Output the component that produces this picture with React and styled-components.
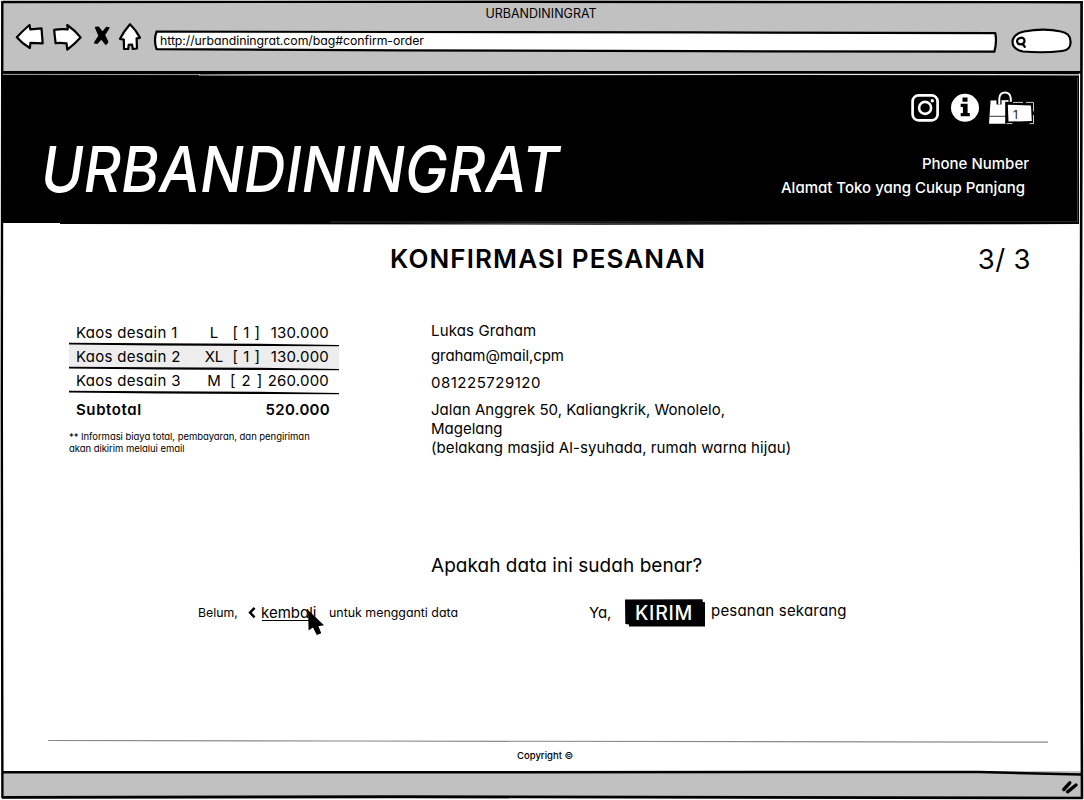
import React from "react";
import styled, { createGlobalStyle } from "styled-components";

const GlobalStyle = createGlobalStyle`
  *, *::before, *::after { box-sizing: border-box; }
  body { margin: 0; background: #fff; overflow: hidden; }
  p, h1, h2 { margin: 0; font-weight: inherit; }
`;

const Window = styled.div`
  position: relative;
  display: flex;
  flex-direction: column;
  width: 1084px;
  height: 800px;
  overflow: hidden;
  background: #fff;
  color: #000;
  font-family: Inter, "Liberation Sans", sans-serif;
  font-feature-settings: "cv11";
`;

const FrameLines = styled.svg`
  position: absolute;
  inset: 0;
  pointer-events: none;
`;

const TitleBar = styled.div`
  flex: none;
  height: 73px;
  margin: 0 2px;
  background: #c1c1c1;
`;

const WindowTitle = styled.div`
  height: 22px;
  padding: 4px 2px 0 0;
  font-size: 12.5px;
  line-height: 19px;
  text-align: center;
`;

const Toolbar = styled.div`
  display: flex;
  padding-left: 13px;
`;

const ToolIcon = styled.svg`
  display: block;
  flex: none;
  margin-right: ${(p) => p.$gap || 0}px;
  fill: #fff;
  stroke: #000;
  stroke-width: 2.2;
  stroke-linejoin: round;
  stroke-linecap: round;
`;

const AddressField = styled.div`
  position: relative;
  width: 845px;
  height: 32px;
  margin-right: 12px;
`;

const FieldShape = styled(ToolIcon)`
  position: absolute;
  inset: 0;
`;

const Address = styled.span`
  position: relative;
  display: block;
  padding: 9px 0 0 7px;
  font-size: 12.3px;
  line-height: 20px;
  letter-spacing: -0.05px;
`;

const Header = styled.header`
  flex: none;
  display: flex;
  justify-content: space-between;
  height: 150px;
  margin: 0 5px 0 3px;
  padding: 17px 45px 0 38px;
  background: #000;
  color: #fff;
`;

const Brand = styled.h1`
  width: 560px;
  padding-top: 44px;
  font-size: 63.5px;
  font-weight: 500;
  font-style: italic;
  line-height: 69px;
  letter-spacing: 0.2px;
  transform: scaleX(0.907);
  transform-origin: left;
`;

const HeaderSide = styled.div`
  display: flex;
  flex-direction: column;
  align-items: flex-end;
`;

const IconRow = styled.div`
  display: flex;
  align-self: flex-end;
  margin-right: -3px;
  height: 36px;
`;

const Bag = styled.div`
  position: relative;
  width: 48px;
  height: 36px;
`;

const BagCount = styled.span`
  position: absolute;
  left: 24px;
  top: 17px;
  color: #222;
  font-size: 12px;
  line-height: 16px;
`;

const StoreLine = styled.p`
  margin: ${(p) => p.$margin};
  font-size: 15px;
  font-weight: 500;
  line-height: 24px;
`;

const Main = styled.main`
  flex: 1;
  display: flex;
  flex-direction: column;
  padding-top: 19px;
`;

const HeadingRow = styled.div`
  display: flex;
  justify-content: space-between;
  height: 32px;
  padding: 0 53px 0 390px;
  line-height: 32px;
`;

const Heading = styled.h2`
  padding-top: 1px;
  font-size: 26px;
  font-weight: 600;
  letter-spacing: 1.1px;
`;

const Step = styled.span`
  padding-top: 1px;
  font-size: 27.5px;
  letter-spacing: 0.4px;
  white-space: pre;
`;

const Details = styled.section`
  display: flex;
  gap: 92px;
  height: 280px;
  padding: 47px 0 0 69px;
`;

const Order = styled.div`
  width: 270px;
  font-size: 15px;
`;

const ItemRow = styled.div`
  position: relative;
  display: grid;
  grid-template-columns: 121px 34px 31px 1fr;
  height: 24px;
  padding: 0 10px 0 7px;
  line-height: 23px;
  white-space: nowrap;
  background: ${(p) => (p.$shaded ? "#ededed" : "transparent")};
`;

const ItemName = styled.span`
  letter-spacing: 0.3px;
`;

const Centered = styled.span`
  display: flex;
  justify-content: center;
  letter-spacing: ${(p) => p.$spacing || 0}px;
`;

const Price = styled.span`
  text-align: right;
  letter-spacing: 0.2px;
`;

const RowLine = styled.svg`
  position: absolute;
  left: 0;
  bottom: -3px;
  z-index: 1;
`;

const Subtotal = styled.div`
  display: flex;
  justify-content: space-between;
  padding: 0 9px 0 7px;
  font-weight: 600;
  line-height: 33px;
`;

const SubtotalLabel = styled.span`
  letter-spacing: 0.6px;
`;

const SubtotalValue = styled.span`
  letter-spacing: 0.3px;
`;

const Note = styled.p`
  margin-top: 5px;
  font-size: 9.5px;
  line-height: 12px;
  letter-spacing: -0.05px;
  white-space: nowrap;
`;

const Contact = styled.div`
  font-size: 15px;
  line-height: 19px;
`;

const ContactLine = styled.p`
  margin-bottom: ${(p) => p.$after || 0}px;
  letter-spacing: ${(p) => p.$spacing || 0}px;
  white-space: nowrap;
`;

const Question = styled.p`
  padding-left: 431px;
  font-size: 19px;
  line-height: 24px;
  letter-spacing: 0.04px;
`;

const Actions = styled.div`
  display: flex;
  height: 28px;
  margin-top: 21px;
  padding-left: 198px;
  line-height: 27px;
  white-space: nowrap;
`;

const ActionText = styled.span`
  flex: none;
  width: ${(p) => p.$width}px;
  margin-top: ${(p) => p.$shift || 0}px;
  font-size: ${(p) => p.$size}px;
  letter-spacing: ${(p) => p.$spacing || 0}px;
`;

const Chevron = styled.svg`
  width: 13px;
  height: 28px;
  fill: none;
  stroke: #000;
  stroke-width: 2.4;
`;

const BackLink = styled.a`
  position: relative;
  width: 68px;
  font-size: 15px;

  &::after {
    content: "";
    position: absolute;
    left: 1px;
    top: 21px;
    width: 54px;
    height: 1px;
    background: #000;
  }
`;

const Cursor = styled.svg`
  position: absolute;
  left: 46px;
  top: 9px;
  z-index: 1;
`;

const SendButton = styled.button`
  position: relative;
  width: 80px;
  height: 28px;
  margin-right: 6px;
  padding: 0;
  border: 0;
  background: none;
  color: #fff;
  font: inherit;
  font-size: 19.5px;
  font-weight: 500;
  letter-spacing: 0.7px;
  line-height: 27px;
  text-align: center;
`;

const ButtonShape = styled.svg`
  position: absolute;
  inset: 0;
`;

const ButtonLabel = styled.span`
  position: relative;
  left: -1px;
`;

const Footer = styled.footer`
  margin-top: auto;
  height: 31px;
  padding: 0 36px 0 48px;
`;

const FooterLine = styled.svg`
  display: block;
`;

const Copyright = styled.p`
  padding-left: 469px;
  font-size: 9.5px;
  font-weight: 500;
  line-height: 24px;
`;

const StatusBar = styled.div`
  flex: none;
  height: 28px;
  margin: 0 2px 1px;
  background: #c1c1c1;
`;

const items = [
  { name: "Kaos desain 1", size: "L", qty: "[ 1 ]", price: "130.000" },
  { name: "Kaos desain 2", size: "XL", qty: "[ 1 ]", price: "130.000" },
  { name: "Kaos desain 3", size: "M", qty: "[ 2 ]", price: "260.000" },
];

function Browser() {
  return (
    <TitleBar>
      <WindowTitle>URBANDININGRAT</WindowTitle>
      <Toolbar>
        <ToolIcon $gap={7} width="30" height="32" viewBox="15 22 30 32">
          <path d="M16.8 37.3 Q23 30.5 29.5 25 L30.3 29.3 L41.5 28.3 L42.7 43.4 L30.5 42.8 L29.8 48 Q22.5 44 16.8 37.3Z" />
        </ToolIcon>
        <ToolIcon $gap={8} width="32" height="32" viewBox="52 22 32 32">
          <path d="M54.2 29.8 Q60 28.8 67.8 29.3 L67.3 25 Q74.5 30 80.6 37.4 Q74.5 44 67.3 49.6 L66.5 43.4 Q60 42.4 55.6 43.2 Q54.7 36 54.2 29.8Z" />
        </ToolIcon>
        <ToolIcon $gap={5} width="20" height="32" viewBox="92 22 20 32">
          <path
            d="M95.5 27.5 L98.5 27.2 L102.5 32.5 L106.5 27.3 L109 27.8 L104.5 35 L107.8 42 L105.8 44.3 L101.5 38.8 L97 43.3 L94.5 42.8 L99 35.8Z"
            fill="#000"
            strokeWidth="1.3"
          />
        </ToolIcon>
        <ToolIcon $gap={10} width="26" height="32" viewBox="117 22 26 32">
          <path d="M130 24.2 Q136 30 140 37.8 L136.6 38.4 L137 48.5 L132.8 49 L132 44.5 L128.7 44.8 L128.2 49 L124 49 L123.8 39.6 L120 38.8 Q124 31 130 24.2Z" />
        </ToolIcon>
        <AddressField>
          <FieldShape width="845" height="32" viewBox="153 22 845 32">
            <path d="M156.5 31.6 L400 32 L700 32.4 L995.3 33.2 Q997 42 994.4 51.6 L700 51.2 L400 50.4 L156.5 49.2 Q153.5 40 156.5 31.6Z" />
          </FieldShape>
          <Address>http://urbandiningrat.com/bag#confirm-order</Address>
        </AddressField>
        <ToolIcon width="63" height="32" viewBox="1010 22 63 32">
          <path d="M1024 31.5 Q1044 27.6 1061 31.5 Q1071 33.5 1070.5 42 Q1071 50 1062 51 Q1044 53.2 1023 51.5 Q1012.5 49.5 1012.5 41.5 Q1013 34 1024 31.5Z" />
          <path d="M1020.5 37.8 Q1024.5 37.2 1024.5 41.2 Q1024 44.3 1020.3 44.4 Q1017 44 1017 41 Q1017.3 38.2 1020.5 37.8Z M1022.8 44 L1024.8 46.8" />
        </ToolIcon>
      </Toolbar>
    </TitleBar>
  );
}

function StoreHeader() {
  return (
    <Header>
      <Brand>URBANDININGRAT</Brand>
      <HeaderSide>
        <IconRow>
          <svg width="40" height="36" viewBox="911 90 40 36" fill="none" stroke="#fff">
            <rect x="912.6" y="95.4" width="25" height="25" rx="6" strokeWidth="2.7" />
            <circle cx="925.1" cy="107.9" r="6" strokeWidth="2.6" />
            <circle cx="932.3" cy="100.7" r="1.7" fill="#fff" stroke="none" />
          </svg>
          <svg width="38" height="36" viewBox="951 90 38 36">
            <circle cx="965" cy="107.8" r="14" fill="#fff" />
            <path d="M962.5 97.5h5v4.2h-5z M960.7 103.8h6.9v9.2h2.2v3.2h-9.1v-3.2h2.2v-6h-2.2z" fill="#000" />
          </svg>
          <Bag>
            <svg width="48" height="36" viewBox="989 90 48 36">
              <path d="M990.6 100.5 L1012.5 100 L1014 123.7 L989 123.7Z" fill="#fff" />
              <path d="M989.5 116.3h24" stroke="#000" strokeWidth="0.8" />
              <path d="M999 104.5V98.5Q999.5 92.6 1005 92.6T1011 98.5V104" fill="none" stroke="#000" strokeWidth="5" />
              <path d="M999.3 104.5V98.5Q999.8 92.6 1005 92.6T1010.8 98.5V104" fill="none" stroke="#fff" strokeWidth="2" />
              <rect x="1005.2" y="101.8" width="29" height="22.5" fill="#000" />
              <path d="M1007.8 104.7 L1031 105.4 L1031.8 121 L1008.5 121.6Z" fill="#fff" />
              <path d="M1013 102.4h10M1026 102.4h7.5v9M1033.5 115v8.6h-4M1006.5 123.6h6" fill="none" stroke="#fff" strokeWidth="0.8" />
            </svg>
            <BagCount>1</BagCount>
          </Bag>
        </IconRow>
        <StoreLine $margin="26px 5px 0 0">Phone Number</StoreLine>
        <StoreLine $margin="0 9px 0 0">Alamat Toko yang Cukup Panjang</StoreLine>
      </HeaderSide>
    </Header>
  );
}

function OrderTable() {
  return (
    <Order>
      {items.map((item, i) => (
        <ItemRow key={item.name} $shaded={i === 1}>
          <ItemName>{item.name}</ItemName>
          <Centered>{item.size}</Centered>
          <Centered $spacing={i === 2 ? 0.9 : 0.5}>{item.qty}</Centered>
          <Price>{item.price}</Price>
          <RowLine width="270" height="6" viewBox="0 0 270 6">
            <path d="M0 0.8 L85 1.3 L190 1.8 L270 3 V4.3 L200 4.1 L90 3.4 L0 2.4Z" />
          </RowLine>
        </ItemRow>
      ))}
      <Subtotal>
        <SubtotalLabel>Subtotal</SubtotalLabel>
        <SubtotalValue>520.000</SubtotalValue>
      </Subtotal>
      <Note>
        ** Informasi biaya total, pembayaran, dan pengiriman
        <br />
        akan dikirim melalui email
      </Note>
    </Order>
  );
}

export default function App() {
  return (
    <>
      <GlobalStyle />
      <Window>
        <Browser />
        <StoreHeader />
        <Main>
          <HeadingRow>
            <Heading>KONFIRMASI PESANAN</Heading>
            <Step>3/ 3</Step>
          </HeadingRow>
          <Details>
            <OrderTable />
            <Contact>
              <ContactLine $after={6} $spacing={0.15}>Lukas Graham</ContactLine>
              <ContactLine $after={8} $spacing={-0.1}>graham@mail,cpm</ContactLine>
              <ContactLine $after={8} $spacing={0.5}>081225729120</ContactLine>
              <ContactLine $spacing={0.04}>Jalan Anggrek 50, Kaliangkrik, Wonolelo,</ContactLine>
              <ContactLine>Magelang</ContactLine>
              <ContactLine $spacing={0.08}>(belakang masjid Al-syuhada, rumah warna hijau)</ContactLine>
            </Contact>
          </Details>
          <Question>Apakah data ini sudah benar?</Question>
          <Actions>
            <ActionText $width={50} $size={12.3}>Belum,</ActionText>
            <Chevron viewBox="0 0 13 28">
              <path d="M6.6 8.8 L2 13.6 L6.6 18.4" />
            </Chevron>
            <BackLink>
              kembali
              <Cursor width="18" height="28" viewBox="307 608 18 28">
                <path d="M308 610 L308.6 630.5 L313 627.6 L316.8 635 L321.3 633.2 L318.4 626.2 L324 625.2Z" />
              </Cursor>
            </BackLink>
            <ActionText $width={260} $size={12.4}>untuk mengganti data</ActionText>
            <ActionText $width={36} $size={15} $spacing={-0.1}>Ya,</ActionText>
            <SendButton type="button">
              <ButtonShape width="80" height="28" viewBox="0 0 80 28">
                <path d="M0 0.5 L77.5 0.3 L77.8 3 L80 3.3 V27.4 L4 27.6 V25.5 L0.3 25Z" />
              </ButtonShape>
              <ButtonLabel>KIRIM</ButtonLabel>
            </SendButton>
            <ActionText $width={140} $size={15} $spacing={0.2} $shift={-2}>pesanan sekarang</ActionText>
          </Actions>
          <Footer>
            <FooterLine width="1000" height="4" viewBox="0 0 1000 4">
              <path d="M0 0.5 L300 1 L1000 2.2" fill="none" stroke="#8a8a8a" strokeWidth="1.2" />
            </FooterLine>
            <Copyright>Copyright ©</Copyright>
          </Footer>
        </Main>
        <StatusBar />
        <FrameLines width="1084" height="800" viewBox="0 0 1084 800" fill="none" stroke="#000">
          <path d="M0 0.5H1084M0.5 0V800" stroke="#fff" />
          <path d="M2.3 2 L500 1.8 L1081.5 2.2" strokeWidth="2.4" />
          <path d="M2.3 1 L1.8 400 L2.4 798" strokeWidth="2.4" />
          <path d="M1081.6 1 L1080.8 400 L1082 799" strokeWidth="2.6" />
          <path d="M2 797.4 L400 796.6 L1082.5 798" strokeWidth="2.6" />
          <path d="M3 72.3H1081" strokeWidth="2.4" />
          <path d="M3 74.4 L200 74.6" stroke="#ccc" strokeWidth="0.8" />
          <path d="M199 75 L800 74.3 L1080 74.8" stroke="#e4e4e4" strokeWidth="1.2" />
          <path d="M1077.5 78V222" stroke="#555" strokeWidth="0.7" />
          <path d="M330 222 L1078 221.8" stroke="#555" strokeWidth="0.6" />
          <path d="M60 223.2 L600 224 L1079 223.4" strokeWidth="1.4" />
          <path d="M3 772.3 L980 772 L1081 774.6" strokeWidth="2.5" />
          <path d="M1063.8 789.5 L1069.8 782.8 M1067.5 791.8 L1076 785" strokeWidth="3.4" strokeLinecap="round" />
        </FrameLines>
      </Window>
    </>
  );
}
